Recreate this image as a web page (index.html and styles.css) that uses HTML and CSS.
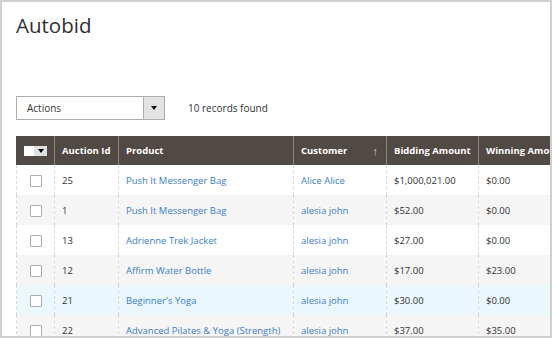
FILE: index.html
```html
<!DOCTYPE html>
<html>
<head>
<meta charset="utf-8">
<link rel="stylesheet" href="styles.css">
</head>
<body>
<div class="frame">
  <h1 class="title">Autobid</h1>
  <div class="toolbar">
    <div class="select">
      <span class="select-label">Actions</span>
      <span class="select-btn"><span class="tri"></span></span>
    </div>
    <span class="count">10 records found</span>
  </div>
  <div class="grid-wrap">
    <table class="grid">
      <colgroup>
        <col class="c-check"><col class="c-id"><col class="c-prod"><col class="c-cust"><col class="c-bid"><col class="c-win">
      </colgroup>
      <thead>
        <tr>
          <th class="th-check"><span class="mass"><span class="mass-box"></span><span class="mass-btn"><span class="tri"></span></span></span></th>
          <th>Auction Id</th>
          <th>Product</th>
          <th class="sorted">Customer<span class="arrow">↑</span></th>
          <th>Bidding Amount</th>
          <th>Winning Amount</th>
        </tr>
      </thead>
      <tbody>
        <tr><td class="td-check"><span class="cb"></span></td><td>25</td><td><a>Push It Messenger Bag</a></td><td><a>Alice Alice</a></td><td>$1,000,021.00</td><td>$0.00</td></tr>
        <tr class="alt"><td class="td-check"><span class="cb"></span></td><td>1</td><td><a>Push It Messenger Bag</a></td><td><a>alesia john</a></td><td>$52.00</td><td>$0.00</td></tr>
        <tr><td class="td-check"><span class="cb"></span></td><td>13</td><td><a>Adrienne Trek Jacket</a></td><td><a>alesia john</a></td><td>$27.00</td><td>$0.00</td></tr>
        <tr class="alt"><td class="td-check"><span class="cb"></span></td><td>12</td><td><a>Affirm Water Bottle</a></td><td><a>alesia john</a></td><td>$17.00</td><td>$23.00</td></tr>
        <tr class="hover"><td class="td-check"><span class="cb"></span></td><td>21</td><td><a>Beginner's Yoga</a></td><td><a>alesia john</a></td><td>$30.00</td><td>$0.00</td></tr>
        <tr class="alt"><td class="td-check"><span class="cb"></span></td><td>22</td><td><a>Advanced Pilates &amp; Yoga (Strength)</a></td><td><a>alesia john</a></td><td>$37.00</td><td>$35.00</td></tr>
      </tbody>
    </table>
  </div>
</div>
</body>
</html>
```

FILE: styles.css
```css
* { box-sizing: border-box; }
html, body { margin: 0; padding: 0; background: #fff; }
body { font-family: "Open Sans", "Noto Sans", sans-serif; color: #333; }

.frame {
  width: 552px;
  height: 338px;
  border: 2px solid #cfcfcf;
  overflow: hidden;
  padding-left: 14px;
}

.title {
  margin: 9px 0 0 0;
  font-size: 20.5px;
  font-weight: 400;
  line-height: 28px;
  color: #303030;
}

.toolbar {
  margin-top: 57px;
  display: flex;
  align-items: center;
  height: 24px;
}

.select {
  width: 149px;
  height: 24px;
  border: 1px solid #adadad;
  display: flex;
  align-items: stretch;
  background: #fff;
}
.select-label {
  flex: 1;
  font-size: 10px;
  line-height: 22px;
  padding-left: 10px;
  color: #333;
}
.select-btn {
  width: 21px;
  background: #e3e3e3;
  border-left: 1px solid #adadad;
  display: flex;
  align-items: center;
  justify-content: center;
}
.tri {
  width: 0; height: 0;
  border-left: 3px solid transparent;
  border-right: 3px solid transparent;
  border-top: 4px solid #000;
}

.count {
  margin-left: 23px;
  font-size: 10px;
  color: #333;
}

.grid-wrap {
  margin-top: 16px;
}

.grid {
  border-collapse: collapse;
  table-layout: fixed;
  width: 640px;
  font-size: 9.5px;
}
.c-check { width: 38px; }
.c-id { width: 64px; }
.c-prod { width: 175px; }
.c-cust { width: 93px; }
.c-bid { width: 92px; }
.c-win { width: 178px; }

.grid th {
  background: #514943;
  color: #fff;
  font-weight: 700;
  text-align: left;
  height: 29px;
  padding: 0 7px;
  border-left: 1px solid #8a837e;
  white-space: nowrap;
  overflow: hidden;
}
.grid th:first-child { border-left: 1px solid #514943; }

.sorted { position: relative; }
.arrow {
  position: absolute;
  right: 8px;
  top: 7px;
  font-weight: 400;
  color: #d6d2cf;
  font-size: 11px;
}

.th-check { padding: 0 !important; text-align: center !important; }
.mass {
  display: inline-flex;
  vertical-align: middle;
  height: 10px;
}
.mass-box { width: 10px; height: 10px; background: #fff; }
.mass-btn {
  width: 13px; height: 10px;
  background: #e0e0e0;
  display: flex; align-items: center; justify-content: center;
}

.grid td {
  height: 30px;
  padding: 0 7px;
  color: #333;
  border-left: 1px dashed #d6d6d6;
  white-space: nowrap;
  overflow: hidden;
}
.grid tr.alt td { background: #f5f5f5; }
.grid tr.hover td { background: #eaf7fd; }

.grid a { color: #3b7ec8; text-decoration: none; }

.td-check { padding: 0 !important; text-align: center; }
.cb {
  display: inline-block;
  vertical-align: middle;
  width: 12px; height: 12px;
  border: 1px solid #adadad;
  border-radius: 1px;
  background: #fff;
}
```
